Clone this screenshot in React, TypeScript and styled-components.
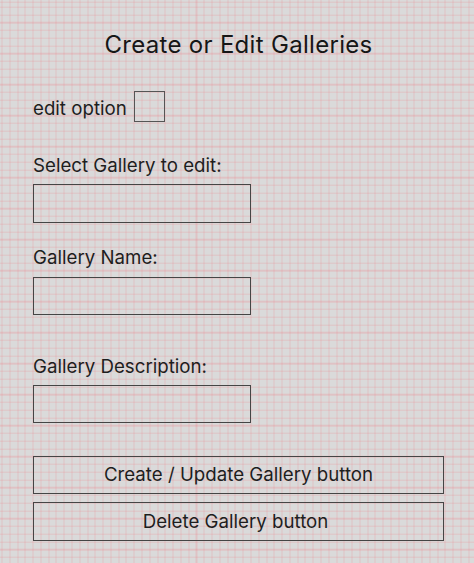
import React from "react";
import styled, { createGlobalStyle } from "styled-components";

const GlobalStyle = createGlobalStyle`
  html, body {
    margin: 0;
    padding: 0;
  }
  body {
    font-family: Inter, "Noto Sans", "Liberation Sans", sans-serif;
    color: #1c1c1c;
  }
`;

const Page = styled.div`
  min-height: 100vh;
  box-sizing: border-box;
  background-color: #dadada;
  background-image:
    repeating-linear-gradient(
      to right,
      rgba(240, 110, 120, 0.22) 0px,
      rgba(240, 110, 120, 0.22) 1px,
      transparent 1px,
      transparent 7.78px
    ),
    repeating-linear-gradient(
      to bottom,
      rgba(240, 110, 120, 0.22) 0px,
      rgba(240, 110, 120, 0.22) 1px,
      transparent 1px,
      transparent 7.75px
    );
  background-position: 1.5px 6.7px;
  padding-top: 30px;
  padding-left: 33px;
  overflow: hidden;
`;

const Column = styled.div`
  width: 411px;
  display: flex;
  flex-direction: column;
`;

const Title = styled.h1`
  margin: 0;
  font-size: 24px;
  line-height: 29px;
  letter-spacing: 0.3px;
  font-weight: 400;
  text-align: center;
  color: #161616;
`;

const OptionRow = styled.div`
  margin-top: 32px;
  display: flex;
  align-items: center;
  gap: 7px;
`;

const Label = styled.label`
  display: block;
  font-size: 18.7px;
  line-height: 22px;
  font-weight: 400;
  color: #1e1e1e;
`;

const InlineLabel = styled(Label)`
  margin-top: 4px;
`;

const CheckBox = styled.div`
  width: 31px;
  height: 31px;
  box-sizing: border-box;
  border: 1px solid #555;
`;

const Field = styled.div<{ $top: number }>`
  margin-top: ${(p) => p.$top}px;
  display: flex;
  flex-direction: column;
  gap: 7.3px;
`;

const InputBox = styled.div`
  width: 217.5px;
  height: 38.6px;
  box-sizing: border-box;
  border: 1px solid #454545;
`;

const ButtonStack = styled.div`
  margin-top: 32.5px;
  display: flex;
  flex-direction: column;
  gap: 8px;
`;

const WireButton = styled.div<{ $shift?: number }>`
  width: 411px;
  height: 38.5px;
  box-sizing: border-box;
  border: 1px solid #454545;
  display: flex;
  align-items: center;
  justify-content: center;
  padding-right: ${(p) => p.$shift ?? 0}px;
  font-size: 18.7px;
  line-height: 22px;
  color: #1e1e1e;
`;

const fields = [
  { label: "Select Gallery to edit:", top: 32.8 },
  { label: "Gallery Name:", top: 24.7 },
  { label: "Gallery Description:", top: 40.3 },
];

export default function App() {
  return (
    <>
      <GlobalStyle />
      <Page>
        <Column>
          <Title>Create or Edit Galleries</Title>
          <OptionRow>
            <InlineLabel>edit option</InlineLabel>
            <CheckBox />
          </OptionRow>
          {fields.map((f) => (
            <Field key={f.label} $top={f.top}>
              <Label>{f.label}</Label>
              <InputBox />
            </Field>
          ))}
          <ButtonStack>
            <WireButton>Create / Update Gallery button</WireButton>
            <WireButton $shift={6}>Delete Gallery button</WireButton>
          </ButtonStack>
        </Column>
      </Page>
    </>
  );
}
